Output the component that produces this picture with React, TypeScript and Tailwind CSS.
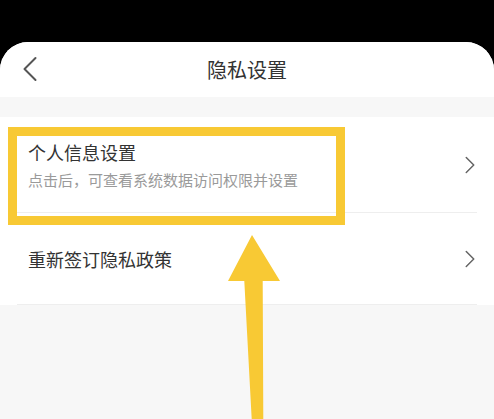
import { ChevronLeft, ChevronRight } from 'lucide-react'

const FONT = { fontFamily: '"Noto Sans CJK SC", "Noto Sans", sans-serif' }

interface RowProps {
  title: string
  desc?: string
  height: string
}

function SettingRow({ title, desc, height }: RowProps) {
  return (
    <div className={`mx-[17px] flex items-center border-b border-[#eeeeee] pl-[11px] ${height}`}>
      <div className="flex flex-1 flex-col">
        <span className="text-[18px] leading-[24px] text-[#333333]">{title}</span>
        {desc && <span className="mt-[6px] text-[15px] leading-[20px] text-[#9a9a9a]">{desc}</span>}
      </div>
      <ChevronRight className="mr-[-8px] h-[30px] w-[30px] text-[#666666]" strokeWidth={1.2} />
    </div>
  )
}

export default function App() {
  return (
    <div className="relative h-[419px] w-full overflow-hidden bg-black pt-[42px]" style={FONT}>
      <div className="flex h-full flex-col overflow-hidden rounded-t-[28px] bg-[#f7f7f7]">
        <header className="relative flex h-[55px] items-center justify-center bg-white">
          <ChevronLeft
            className="absolute left-[8px] top-[5px] h-[44px] w-[44px] text-[#555555]"
            strokeWidth={1.1}
          />
          <h1 className="text-[20px] text-[#333333]">隐私设置</h1>
        </header>

        <div className="mt-[20px] bg-white">
          <SettingRow title="个人信息设置" desc="点击后，可查看系统数据访问权限并设置" height="h-[96px]" />
          <SettingRow title="重新签订隐私政策" height="h-[92px]" />
        </div>
      </div>

      {/* annotation overlay */}
      <div className="pointer-events-none absolute left-[8px] top-[127px] h-[98px] w-[337px] border-[9px] border-[#f8c934]" />
      <svg className="pointer-events-none absolute left-0 top-0" width="494" height="419" viewBox="0 0 494 419">
        <polygon
          points="252,235 280,281 262.7,281 263.3,419 251.7,419 244.3,281 228,281"
          fill="#f8c934"
        />
      </svg>
    </div>
  )
}
